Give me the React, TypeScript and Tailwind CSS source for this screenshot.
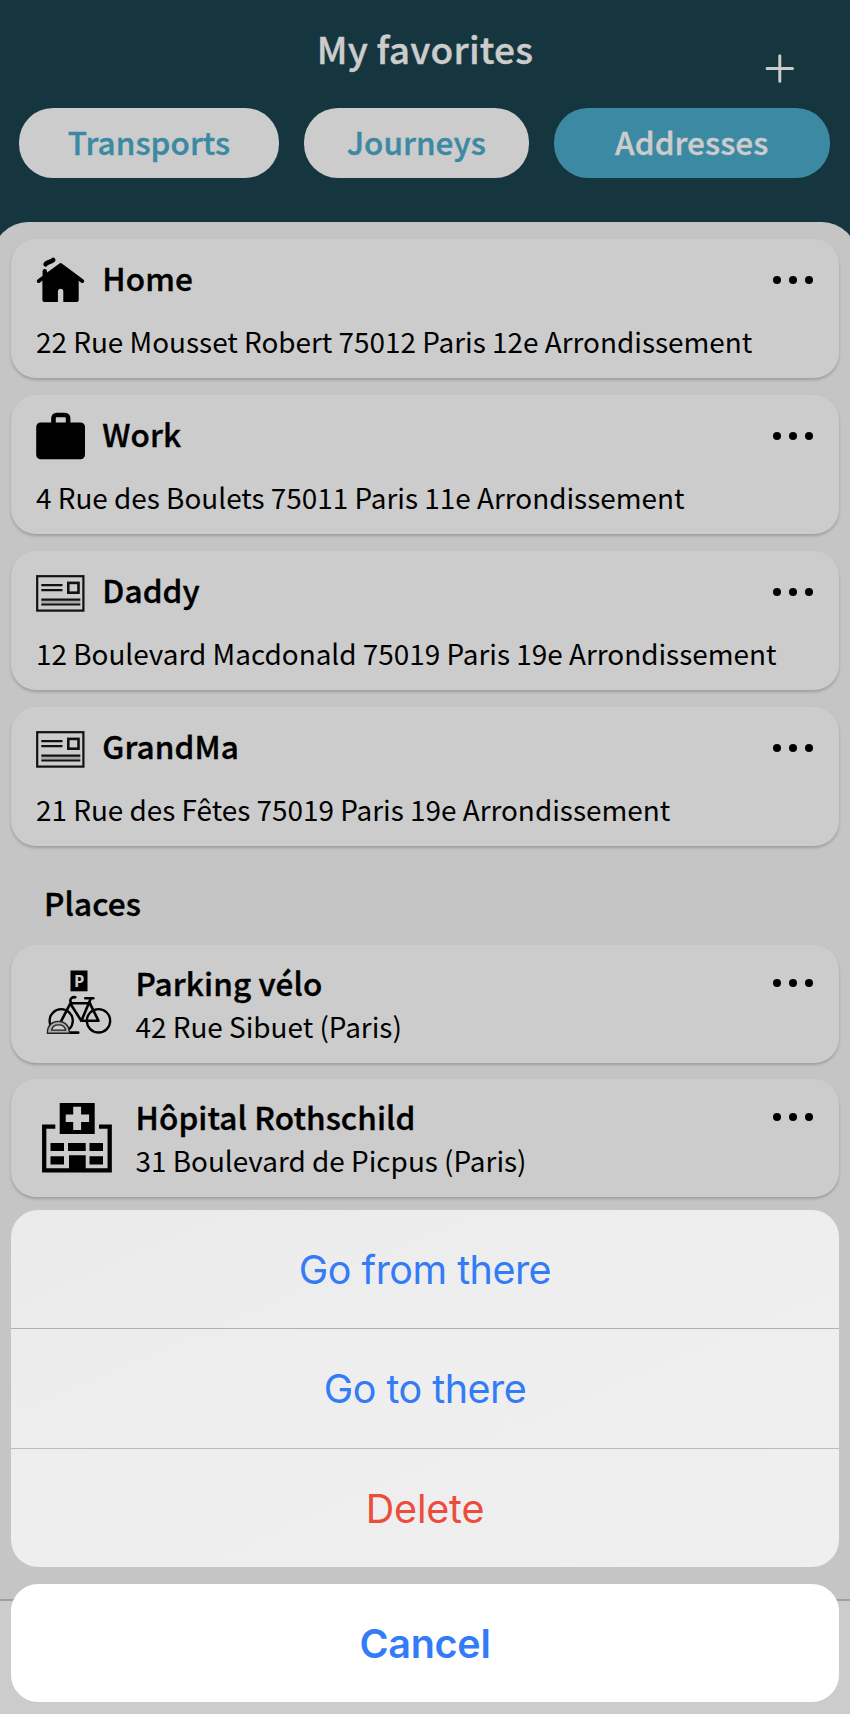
import type { ReactNode } from "react";

function HomeIcon() {
  return (
    <svg className="h-[50px] w-[50px] shrink-0" viewBox="36 255 50 50" fill="none" stroke="#000" strokeLinecap="round" strokeLinejoin="round">
      <path d="M38.8 281 60.6 265 82.2 281" strokeWidth="4" />
      <path d="M44.8 280V271.2" strokeWidth="4.4" />
      <path d="M60.6 265 78.7 278.6V300a2 2 0 0 1-2 2H63.3V290.8a2.8 2.8 0 0 0-5.4 0V302H44.4a2 2 0 0 1-2-2V278.6Z" fill="#000" stroke="none" />
      <path d="M45.6 264.3C46.8 261.6 49.6 263 53.2 260" strokeWidth="4.600" />
    </svg>
  );
}

function WorkIcon() {
  return (
    <svg className="h-[50px] w-[50px] shrink-0" viewBox="36 411 50 50">
      <rect x="36.2" y="422.4" width="48.8" height="36.8" rx="4.5" />
      <path d="M53.5 424v-6a3 3 0 0 1 3-3h8.600a3 3 0 0 1 3 3v6" fill="none" stroke="#000" strokeWidth="4.600" />
    </svg>
  );
}

function AddressIcon() {
  return (
    <svg className="h-[50px] w-[50px] shrink-0" viewBox="36 566 50 50" fill="none" stroke="#111">
      <rect x="37.2" y="575.2" width="46.2" height="34.4" strokeWidth="2.200" />
      <path d="M41.3 601h39" stroke="#a6a6a6" strokeWidth="3" />
      <path d="M41.3 584.2h21.2M41.3 589.1h21.2M41.3 598.600h39M41.3 603.5h39" strokeWidth="2.200" />
      <rect x="68.3" y="581.9" width="10.200" height="9.800" strokeWidth="2.600" />
    </svg>
  );
}

function BikeParkingIcon() {
  return (
    <svg className="h-[76px] w-[74px] shrink-0" viewBox="40 965 74 76" fill="none" stroke="#000" strokeLinecap="round" strokeLinejoin="round">
      <rect x="70.5" y="970.5" width="17" height="20.8" fill="#000" stroke="none" />
      <text x="79.3" y="986.9" textAnchor="middle" fontSize="16.5" fontWeight="700" fontFamily="Open Sans" fill="#ccc" stroke="none">P</text>
      <circle cx="61.2" cy="1020.8" r="11.6" strokeWidth="2.300" />
      <circle cx="98.5" cy="1020.8" r="11.7" strokeWidth="2.300" />
      <path d="M75.3 997.2c-3-.3-5 1-5 3.800l.6 1.400-9.600 18.400" strokeWidth="2.600" />
      <path d="M71 1003.2h19M70.600 1004l10.600 16.600" strokeWidth="2.600" />
      <path d="M90.800 998.600 81.400 1020.800h17.100l-8.400-17" strokeWidth="2.600" />
      <path d="M85.300 998.200h8" strokeWidth="2.600" />
      <path d="M67 1032.700h11.200" strokeWidth="2.700" />
      <path d="M47.400 1033.200c-.2-8 5-11.800 11-11.800s11 3.800 11 11.800Z" fill="#aaa" stroke="#222" strokeWidth="1.400" />
      <path d="M51.600 1030.200c.6-3.800 3.200-5.400 7-5.400s6.400 1.600 7 5.400Z" fill="#ccc" stroke="#222" strokeWidth="1.300" />
    </svg>
  );
}

function HospitalIcon() {
  return (
    <svg className="h-[76px] w-[74px] shrink-0" viewBox="40 1099 74 76">
      <path d="M55.300 1126.600H44.200V1170.300H109.700V1126.600H99" fill="none" stroke="#000" strokeWidth="4.300" />
      <rect x="59.700" y="1103" width="35" height="31" />
      <path d="M73.200 1106.800h7.900v7.700h8v7.600h-8v7.800h-7.900v-7.800h-7.500v-7.600h7.500Z" fill="#ccc" />
      <path d="M50.500 1143h13.500v8h-13.500ZM68 1143h17.700v8H68ZM89.500 1143H103v8H89.500ZM50.500 1156.200h13.500v8.200h-13.500ZM89.500 1156.200H103v8.200H89.500ZM69 1155.200h16.700V1171H69Z" />
    </svg>
  );
}

function MoreButton() {
  return (
    <button className="flex h-10 shrink-0 items-center gap-2" aria-label="More">
      <span className="size-2 rounded-full bg-black" />
      <span className="size-2 rounded-full bg-black" />
      <span className="size-2 rounded-full bg-black" />
    </button>
  );
}

const title =
  "whitespace-nowrap text-[31.5px] leading-[43.5px] font-medium tracking-[0.1px] [-webkit-text-stroke:0.4px_currentColor]";
const detail = "whitespace-nowrap text-[27.9px] leading-10";
const card = "rounded-[25px] bg-[#cccccc] shadow-[0_2px_3px_rgba(0,0,0,0.2)]";

function AddressCard({ icon, name, address }: { icon: ReactNode; name: string; address: string }) {
  return (
    <article className={`${card} h-[139px] pt-4 pr-[26px] pl-[25px]`}>
      <div className="flex h-[50px] items-center">
        {icon}
        <h2 className={`${title} mb-[5px] ml-[16.3px] grow`}>{name}</h2>
        <MoreButton />
      </div>
      <p className={`${detail} mt-4`}>{address}</p>
    </article>
  );
}

function PlaceCard({ icon, name, address }: { icon: ReactNode; name: string; address: string }) {
  return (
    <article className={`${card} flex h-[118px] pr-[26px] pl-[29px]`}>
      <div className="pt-5">{icon}</div>
      <div className="ml-[21.5px] grow pt-[16.5px]">
        <h2 className={title}>{name}</h2>
        <p className={`${detail} mt-[1.5px]`}>{address}</p>
      </div>
      <div className="pt-[18px]">
        <MoreButton />
      </div>
    </article>
  );
}

const pill =
  "h-[70.5px] rounded-[34px] pb-[2px] text-[31.5px] font-medium tracking-[0.05px] [-webkit-text-stroke:0.4px_currentColor]";
const action = "flex items-center justify-center pt-[3px] text-[39.5px]";

export default function App() {
  return (
    <div className="relative flex h-[1714px] w-[850px] flex-col overflow-hidden bg-[#15363f] font-['Noto_Sans_CJK_JP',sans-serif] text-black">
      <header className="h-[222px] pt-[23px] pr-5 pl-[19px] text-[#cccccc]">
        <div className="grid h-[84.5px] grid-cols-[1fr_auto_1fr] items-start">
          <h1 className="col-start-2 ml-px text-[37px] leading-[50px] font-medium tracking-[0.25px] whitespace-nowrap [-webkit-text-stroke:0.4px_currentColor]">
            My favorites
          </h1>
          <button className="mt-[31px] mr-[36px] justify-self-end" aria-label="Add">
            <svg className="size-[29px]" viewBox="0 0 29 29" stroke="#ccc" strokeWidth="3" strokeLinecap="round">
              <path d="M14.8 1.800v25.400M2.1 14.500h25.400" />
            </svg>
          </button>
        </div>
        <nav className="flex justify-between">
          <button className={`${pill} w-[260px] bg-[#cccccc] text-[#3c89a3]`}>Transports</button>
          <button className={`${pill} w-[224.5px] bg-[#cccccc] text-[#3c89a3]`}>Journeys</button>
          <button className={`${pill} w-[276.5px] bg-[#3c89a3] text-[#cccccc]`}>Addresses</button>
        </nav>
      </header>

      <main className="-mx-[7px] flex h-[1377px] shrink-0 flex-col rounded-t-[35px] bg-[#c5c5c5] px-[18px] pt-[16.8px]">
        <section className="flex flex-col gap-[17px]">
          <AddressCard icon={<HomeIcon />} name="Home" address="22 Rue Mousset Robert 75012 Paris 12e Arrondissement" />
          <AddressCard icon={<WorkIcon />} name="Work" address="4 Rue des Boulets 75011 Paris 11e Arrondissement" />
          <AddressCard icon={<AddressIcon />} name="Daddy" address="12 Boulevard Macdonald 75019 Paris 19e Arrondissement" />
          <AddressCard icon={<AddressIcon />} name="GrandMa" address="21 Rue des Fêtes 75019 Paris 19e Arrondissement" />
        </section>
        <h2 className={`${title} mt-[35px] mb-[20.5px] ml-[33px]`}>Places</h2>
        <section className="flex flex-col gap-[16px]">
          <PlaceCard icon={<BikeParkingIcon />} name="Parking vélo" address="42 Rue Sibuet (Paris)" />
          <PlaceCard icon={<HospitalIcon />} name="Hôpital Rothschild" address="31 Boulevard de Picpus (Paris)" />
        </section>
      </main>
      <div className="grow border-t-2 border-[#a0a0a0] bg-[#cccccc]" />

      <div className="absolute inset-x-[11px] bottom-3 flex flex-col gap-[17px] font-['Inter',sans-serif]">
        <div className="overflow-hidden rounded-[27px] bg-linear-to-br from-[#eaeaea] via-[#eeeeee] via-40% to-[#efefef] text-[#337cf6]">
          <button className={`${action} h-[118.5px] w-full tracking-[-0.52px]`}>Go from there</button>
          <button className={`${action} h-[119.5px] w-full border-t border-[#b0b0b0] tracking-[-0.52px]`}>Go to there</button>
          <button className={`${action} h-[119.5px] w-full border-t border-[#bcbcbc] tracking-[-0.2px] text-[#eb4d3d]`}>Delete</button>
        </div>
        <button className={`${action} h-[118px] rounded-[27px] bg-white font-semibold tracking-[-0.25px] text-[#337cf6]`}>
          Cancel
        </button>
      </div>
    </div>
  );
}
